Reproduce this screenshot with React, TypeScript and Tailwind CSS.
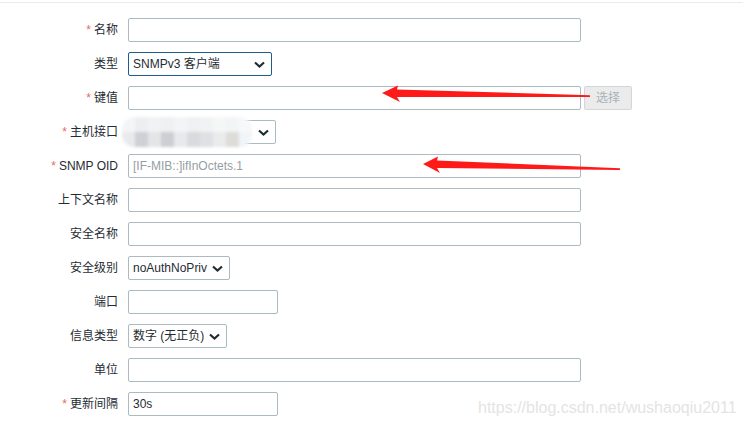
import { ReactNode } from "react";

const font = { fontFamily: '"Liberation Sans", Arial, "Noto Sans CJK SC", sans-serif' };

const Chevron = () => (
  <svg width="11" height="7" viewBox="0 0 11 7" className="shrink-0">
    <path d="M1 1.5 L5.5 5.5 L10 1.5" fill="none" stroke="#1f2c33" strokeWidth="2.2" />
  </svg>
);

const Row = ({ label, req, children }: { label: string; req?: boolean; children: ReactNode }) => (
  <div className="flex items-center h-6">
    <div className="w-[118px] text-right text-[12px] text-[#1f2c33] whitespace-nowrap">
      {req && <span className="text-[#e86a5e] mr-[3px]">*</span>}
      {label}
    </div>
    <div className="ml-[10px] flex items-center gap-[3px]">{children}</div>
  </div>
);

const Input = ({ w, value, placeholder }: { w: string; value?: string; placeholder?: string }) => (
  <div className={`${w} h-6 border border-[#acbbc2] rounded-[2px] bg-white flex items-center px-[4px] text-[12px]`}>
    {value && <span className="text-[#1f2c33]">{value}</span>}
    {placeholder && <span className="text-[#959ea3]">{placeholder}</span>}
  </div>
);

const Select = ({ w, value, focus }: { w: string; value: string; focus?: boolean }) => (
  <div
    className={`${w} h-6 border ${focus ? "border-[#1f5c8c]" : "border-[#acbbc2]"} rounded-[2px] bg-white flex items-center justify-between pl-[4px] pr-[6px] text-[12px] text-[#1f2c33]`}
  >
    <span className="whitespace-nowrap">{value}</span>
    <Chevron />
  </div>
);

const mosaic = [
  ["#f4f5f6", "#eceef0", "#f1f2f3", "#eef0f2", "#f3f4f5", "#eef0f1", "#f1f2f3", "#f5f6f6", "#f3f4f5", "#f7f8f9"],
  ["#e9eaec", "#cdd0d5", "#e4e5e7", "#cbced3", "#e8e9eb", "#d8dadd", "#dfe0e3", "#ebebec", "#dddcd9", "#f1f4f8"],
];

export default function App() {
  return (
    <div className="relative w-[743px] h-[425px] bg-white overflow-hidden" style={font}>
      <div className="mt-[2px] h-[1px] bg-[#ebebeb]" />
      <div className="pt-[15px] flex flex-col gap-[10px]">
        <Row label="名称" req>
          <Input w="w-[453px]" />
        </Row>
        <Row label="类型">
          <Select w="w-[144px]" value="SNMPv3 客户端" focus />
        </Row>
        <Row label="键值" req>
          <Input w="w-[453px]" />
          <div className="w-[48px] h-6 border border-[#d3d5d6] rounded-[2px] bg-[#ebebeb] flex items-center justify-center text-[12px] text-[#a9b2b8]">
            选择
          </div>
        </Row>
        <Row label="主机接口" req>
          <Select w="w-[148px]" value="" />
        </Row>
        <Row label="SNMP OID" req>
          <Input w="w-[453px]" placeholder="[IF-MIB::]ifInOctets.1" />
        </Row>
        <Row label="上下文名称">
          <Input w="w-[453px]" />
        </Row>
        <Row label="安全名称">
          <Input w="w-[453px]" />
        </Row>
        <Row label="安全级别">
          <Select w="w-[102px]" value="noAuthNoPriv" />
        </Row>
        <Row label="端口">
          <Input w="w-[150px]" />
        </Row>
        <Row label="信息类型">
          <Select w="w-[99px]" value="数字 (无正负)" />
        </Row>
        <Row label="单位">
          <Input w="w-[453px]" />
        </Row>
        <Row label="更新间隔" req>
          <Input w="w-[150px]" value="30s" />
        </Row>
      </div>

      {/* blurred host interface */}
      <div className="absolute left-[122px] top-[117px] w-[130px] h-[30px] blur-[1.5px] rounded-[12px] overflow-hidden flex flex-col">
        {mosaic.map((row, i) => (
          <div key={i} className="flex flex-1">
            {row.map((c, j) => (
              <div key={j} className="flex-1" style={{ background: c }} />
            ))}
          </div>
        ))}
      </div>

      {/* red arrows */}
      <svg className="absolute inset-0" width="743" height="425">
        <polygon points="382,93 398,85.5 397,89.5 590,95.2 590,97 397,97 400,102" fill="#ff1a1a" />
        <polygon points="423,164 438,156.5 437,160.5 620,168.2 620,170 437,168 440,173" fill="#ff1a1a" />
      </svg>

      <div className="absolute left-[478px] top-[396px] text-[16px] text-[#e4e4e4] whitespace-nowrap">
        https://blog.csdn.net/wushaoqiu2011
      </div>
    </div>
  );
}
